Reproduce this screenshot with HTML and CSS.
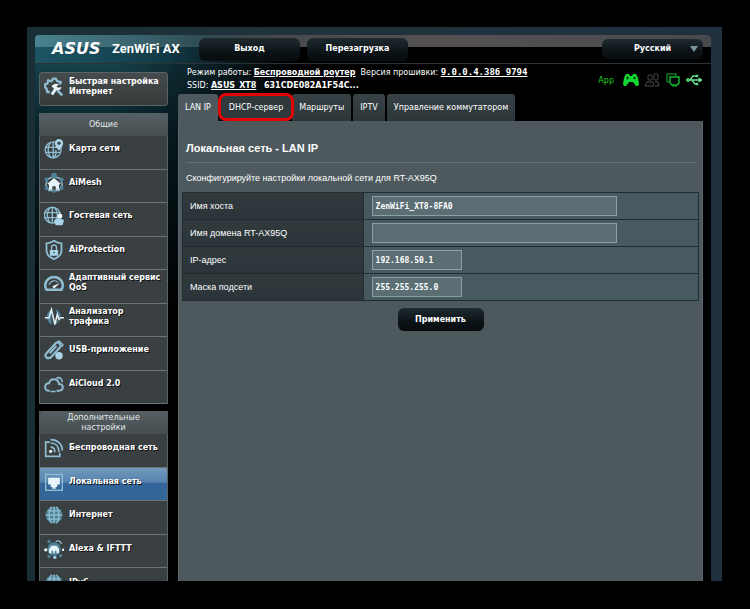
FILE: index.html
```html
<!DOCTYPE html>
<html lang="ru">
<head>
<meta charset="utf-8">
<title>ASUS ZenWiFi AX - LAN IP</title>
<link rel="stylesheet" href="styles.css">
</head>
<body>
<div class="frame">
<div class="shell">
  <header class="topbar">
    <span class="logo">ASUS</span>
    <span class="model">ZenWiFi AX</span>
    <button class="btn" type="button">Выход</button>
    <button class="btn" type="button">Перезагрузка</button>
    <span class="lang">
      <select class="btn lang-select" aria-label="Язык"><option>Русский</option></select>
    </span>
  </header>
  <div class="body">
    <nav class="sidebar">
      <a class="quick" href="#">
        <svg class="icon" viewBox="0 0 24 24"><path d="M7 18H4l-1-4-2-2V9l3-1 1-4 4 1 2-3h3l2 3 4 1-1 3" stroke-width="2.8"/><path class="white" d="M9 11c2-3 6-4 9-2l-3 2 2 2 4-1c-1 4-4 5-6 4l-4 6-3-2 4-6c-1-1-2-2-3-3z"/><path d="M16 16l6 6" stroke-width="3"/></svg>
        <span>Быстрая настройка Интернет</span>
      </a>
      <section class="menu">
        <h2 class="menu-title">Общие</h2>
        <ul class="menu-list general">
          <li><a href="#"><svg class="icon" viewBox="0 0 24 24"><circle cx="11" cy="13" r="9.5"/><path d="M2 10h14M2 16h18M11 4v19M8 4c-4 5-4 13 0 18M14 13c1 3 0 7-2 9"/><path class="solid" d="M18 14c-3-4-5-6-5-9a5 5 0 0 1 10 0c0 3-2 5-5 9z"/><circle class="dark" cx="18" cy="5" r="2"/></svg><span>Карта сети</span></a></li>
          <li><a href="#"><svg class="icon" viewBox="0 0 24 24"><path d="M5 7l7-3 8 3 2 7-4 7H6l-4-7z"/><circle class="teal" cx="12" cy="3" r="3.500"/><circle class="teal" cx="3" cy="8" r="2.500"/><circle class="teal" cx="21" cy="8" r="2.500"/><circle class="teal" cx="3" cy="18" r="2.500"/><circle class="teal" cx="21" cy="18" r="2.500"/><circle class="teal" cx="12" cy="22" r="2"/><path class="white" d="M4 13l8-7 8 7-2 1v6h-4v-4h-4v4H6v-6z"/></svg><span>AiMesh</span></a></li>
          <li><a href="#"><svg class="icon" viewBox="0 0 24 24"><circle cx="10" cy="11" r="9.5"/><path d="M1 8h18M1 14h18M10 2v18M7 2c-4 6-4 12 0 18M13 2c4 6 4 12 0 18"/><circle class="white" cx="19" cy="12" r="3"/><path class="solid" d="M12 18c1-4 11-4 12 0l-2 5h-8z"/></svg><span>Гостевая сеть</span></a></li>
          <li><a href="#"><svg class="icon" viewBox="0 0 24 24"><path d="M12 1c3 2 6 3 9 3v9c0 5-4 8-9 10-5-2-9-5-9-10V4c3 0 6-1 9-3z" stroke-width="2.2"/><path d="M9 12V9a3 3 0 0 1 6 0v3"/><rect class="solid" x="7" y="12" width="10" height="7" rx="1"/><circle class="dark" cx="12" cy="15" r="1"/></svg><span>AiProtection</span></a></li>
          <li><a href="#"><svg class="icon" viewBox="0 0 24 24"><path d="M3 20a10.500 10 0 1 1 18 0z" stroke-width="3"/><path d="M6 14c2-5 7-6 11-3" stroke-width="1.4"/><path class="white" d="M10 16l9-4-7 7z"/></svg><span>Адаптивный сервис QoS</span></a></li>
          <li><a href="#"><svg class="icon" viewBox="0 0 24 24"><path class="teal" d="M9 3v18a10 10 0 0 1 0-18zM14 3c5 2 6 6 6 9h-4zM13 16l5 2-4 3z"/><path class="line" d="M1 13h5l3-10 4 18 3-12 2 6 2-2h4"/></svg><span class="narrow">Анализатор трафика</span></a></li>
          <li><a href="#"><svg class="icon" viewBox="0 0 24 24"><path d="M3 16L14 4c3-3 8 2 5 5L9 20c-4 4-10 0-6-4z" stroke-width="2.6"/><path d="M7 16l8-9" stroke-width="2.4"/><path d="M16 3l2-2 5 5-2 2"/><circle class="solid" cx="18" cy="19" r="4.5"/></svg><span>USB-приложение</span></a></li>
          <li><a href="#"><svg class="icon" viewBox="0 0 24 24"><path d="M15 20h3c6 0 6-8 0-8-1-7-10-8-12-1-6 0-6 9-1 9h2" stroke-width="2.4"/><path d="M15 5c4-2 7 1 7 5M8 21h6" stroke-width="2"/></svg><span>AiCloud 2.0</span></a></li>
        </ul>
      </section>
      <section class="menu">
        <h2 class="menu-title">Дополнительные настройки</h2>
        <ul class="menu-list advanced">
          <li><a href="#"><svg class="icon" viewBox="0 0 24 24"><path d="M7 5H2v17h17v-4" stroke-width="2"/><circle class="white" cx="8" cy="16" r="2"/><path d="M8 11c3 0 5 2 5 6M8 6c6 0 10 4 10 11M8 2c8 0 14 5 14 13" stroke-width="2"/></svg><span>Беспроводная сеть</span></a></li>
          <li><a class="active" href="#"><svg class="icon" viewBox="0 0 24 24"><rect x="2" y="3" width="20" height="19"/><path class="white" d="M5 7h14v8h-3v3h-2v2h-4v-2H8v-3H5z"/></svg><span>Локальная сеть</span></a></li>
          <li><a href="#"><svg class="icon" viewBox="0 0 24 24"><circle class="teal" cx="12" cy="12" r="10"/><path d="M2 12h20M4 7h16M4 17h16M12 2v20M9 2c-4 6-4 14 0 20M15 2c4 6 4 14 0 20"/></svg><span>Интернет</span></a></li>
          <li><a href="#"><svg class="icon" viewBox="0 0 24 24"><circle class="teal" cx="12" cy="12" r="8"/><circle class="white" cx="2" cy="13" r="2"/><circle class="white" cx="23" cy="13" r="1.5"/><circle class="teal" cx="6" cy="3" r="2"/><circle class="teal" cx="6" cy="21" r="2"/><circle class="solid" cx="13" cy="22" r="2"/><circle class="teal" cx="20" cy="20" r="2"/><path d="M14 3c3-2 6 0 7 3"/><path class="white" d="M6 17v-5l3-4h6l3 4v5h-3v-3h-2v3h-2v-3H9v3z"/></svg><span>Alexa &amp; IFTTT</span></a></li>
          <li><a href="#"><svg class="icon" viewBox="0 0 24 24"><circle class="teal" cx="12" cy="12" r="10"/><path d="M2 12h20M4 7h16M4 17h16M12 2v20M9 2c-4 6-4 14 0 20M15 2c4 6 4 14 0 20"/></svg><span>IPv6</span></a></li>
        </ul>
      </section>
    </nav>
    <main class="content">
      <div class="status">
        <div class="status-text">
          <div>Режим работы: <a href="#">Беспроводной роутер</a> &nbsp;Версия прошивки: <a class="version" href="#">9.0.0.4.386_9794</a></div>
          <div>SSID: <a href="#">ASUS_XT8</a> &nbsp; <b>631CDE082A1F54C...</b></div>
        </div>
        <div class="status-icons">
          <a href="#">App</a>
          <svg viewBox="0 0 16 14"><path fill="#12d832" d="M3 1h3l1 2h2l1-2h3l2 4 1 6-1 2h-2l-3-4H6l-3 4H1l-1-2 1-6z"/><path stroke="#031" d="M3 5h3M4.500 3.500v3"/><circle cx="11.500" cy="5" r="1.200" fill="#031"/></svg>
          <svg viewBox="0 0 16 14" stroke="#484c4c"><rect x="4" y="2" width="4" height="5" rx="1"/><rect x="10" y="1" width="4" height="6" rx="1"/><path d="M3 9h6l1 4H1zM11 9h3l1 4h-4"/></svg>
          <svg viewBox="0 0 16 14" stroke="#12b830"><path d="M4 9H2V1h9v2"/><path d="M5 4h9v6l-2 2H7l-2-2z" stroke-width="1.500"/><path d="M7 13h5"/></svg>
          <svg viewBox="0 0 16 14" stroke="#6be08c"><path d="M1 7h13M4 7l3-4h4M6 7l3 4h2" stroke-width="1.400"/><path fill="#6be08c" d="M13 5l3 2-3 2z"/><circle cx="2" cy="7" r="1.500" fill="#12b830"/><circle cx="11" cy="3" r="1" fill="#6be08c"/><circle cx="11" cy="11" r="1" fill="#6be08c"/></svg>
        </div>
      </div>
      <nav class="tabs">
        <a class="tab current" href="#">LAN IP</a>
        <a class="tab marked" href="#">DHCP-сервер</a>
        <a class="tab" href="#">Маршруты</a>
        <a class="tab" href="#">IPTV</a>
        <a class="tab" href="#">Управление коммутатором</a>
      </nav>
      <form class="panel">
        <h1 class="title">Локальная сеть - LAN IP</h1>
        <p class="intro">Сконфигурируйте настройки локальной сети для RT-AX95Q</p>
        <table class="settings">
          <tr><th scope="row"><label for="host">Имя хоста</label></th><td><input class="wide" id="host" type="text" value="ZenWiFi_XT8-8FA0"></td></tr>
          <tr><th scope="row"><label for="domain">Имя домена RT-AX95Q</label></th><td><input class="wide" id="domain" type="text"></td></tr>
          <tr><th scope="row"><label for="ip">IP-адрес</label></th><td><input class="short" id="ip" type="text" value="192.168.50.1"></td></tr>
          <tr><th scope="row"><label for="mask">Маска подсети</label></th><td><input class="short" id="mask" type="text" value="255.255.255.0"></td></tr>
        </table>
        <button class="btn apply" type="button">Применить</button>
      </form>
    </main>
  </div>
</div>
</div>
</body>
</html>
```
FILE: styles.css
```css
* { box-sizing: border-box; }

body {
  margin: 0;
  padding: 27px 28px 28px 27px;
  height: 100vh;
  background: #000;
  color: #fff;
  font: 8px/12px "DejaVu Sans", Verdana, sans-serif;
}

a { color: inherit; text-decoration: none; }

.frame {
  height: 100%;
  padding: 8px 11px 0 8px;
  overflow: hidden;
  background: linear-gradient(90deg, #1a2e36, #22323c 40%, #20303f);
}

.shell {
  height: 100%;
  overflow: hidden;
  border-radius: 4px 4px 0 0;
  background:
    linear-gradient(90deg, rgba(0, 0, 0, 0) 80px, #000 260px),
    linear-gradient(180deg, #16414c 28px, #0a252d 90px, #000 280px);
}

.topbar {
  display: flex;
  align-items: center;
  height: 29px;
  padding: 0 8px 0 17px;
  border-bottom: 1px solid #2c3336;
  background:
    linear-gradient(90deg, rgba(84, 140, 152, 0.8), rgba(62, 92, 100, 0.7) 160px, #47494c 240px, #555153 60%, #48494d) 0 0 / 100% 12px no-repeat,
    linear-gradient(90deg, #1d5564, #123b47 130px, #000 250px);
}

.logo {
  width: 60px;
  font-size: 16px;
  font-weight: bold;
  font-style: oblique;
}

.model {
  width: 87px;
  font: bold 13px/16px Roboto, sans-serif;
}

.btn {
  width: 101px;
  height: 23px;
  margin-right: 7px;
  padding: 0;
  border: 0;
  border-radius: 6px;
  background: linear-gradient(#1f2b30, #0c1316 60%, #080c0e);
  color: #fff;
  font: bold 8px/12px "DejaVu Sans", Verdana, sans-serif;
  text-align: center;
}

.lang {
  position: relative;
  margin-left: auto;
}

.lang::after {
  content: "";
  position: absolute;
  right: 5px;
  top: 7px;
  border: 4px solid transparent;
  border-top: 6px solid #7d959e;
  border-bottom: 0;
  pointer-events: none;
}

.lang-select {
  display: block;
  height: 20px;
  margin: 0;
  appearance: none;
  text-align-last: center;
}

.body {
  display: flex;
  gap: 10px;
  padding: 0 8px 0 4px;
  height: calc(100% - 29px);
}

.sidebar {
  flex: none;
  width: 129px;
  padding-top: 8px;
  font-weight: bold;
  line-height: 10px;
}

.icon {
  flex: none;
  width: 20px;
  height: 20px;
  fill: none;
  stroke: #8fbdd2;
  stroke-width: 1.6;
}
.icon .solid { fill: #a9d3e6; stroke: none; }
.icon .white { fill: #e6f4fa; stroke: none; }
.icon .teal { fill: #4f8296; stroke: none; }
.icon .dark { fill: #384447; stroke: none; }
.icon .line { stroke: #e2f1f7; stroke-width: 1.8; }

.quick,
.menu-list a {
  display: flex;
  align-items: center;
  gap: 5px;
  padding-left: 4px;
}

.quick {
  height: 34px;
  margin-bottom: 7px;
  padding-bottom: 4px;
  border: 1px solid #596467;
  border-radius: 3px;
  background: linear-gradient(#454a4c, #363a3b);
}

.menu {
  margin-bottom: 7px;
  border: solid #596467;
  border-width: 0 1px;
}

.menu-title {
  display: flex;
  align-items: center;
  justify-content: center;
  min-height: 23px;
  margin: 0 -1px;
  padding: 0 24px;
  border-radius: 3px 3px 0 0;
  background: linear-gradient(#566063, #454d50);
  color: #e4e8e9;
  font-size: 8px;
  font-weight: normal;
  text-align: center;
}

.menu-list {
  display: grid;
  grid-auto-rows: 1fr;
  margin: 0;
  padding: 0;
  list-style: none;
  background: #3a3f41;
}
.general { min-height: 268px; }
.advanced { min-height: 168px; }

.menu-list li { border-bottom: 1px solid #6a7375; }

.menu-list a {
  height: 100%;
  padding-bottom: 6px;
  text-shadow: 1px 1px 0 #111;
}
.advanced a { padding-bottom: 4px; }
.narrow { max-width: 80px; }

.menu-list .active {
  background: linear-gradient(#7499bd, #5583ae 45%, #33659a 46%, #366698);
}

.content {
  display: flex;
  flex: 1;
  flex-direction: column;
  min-width: 0;
}

.status {
  display: flex;
  justify-content: space-between;
  height: 30px;
  padding: 2px 0 0 9px;
  line-height: 13px;
}
.status a,
.status b { font-weight: bold; }
.status-text a { text-decoration: underline; }
.status .version { font: bold 9px/12px "DejaVu Sans Mono", monospace; }

.status-icons {
  display: flex;
  align-items: center;
  gap: 5px;
  padding-right: 1px;
}
.status-icons a {
  margin-right: 4px;
  color: #1ed01e;
  font-weight: normal;
}
.status-icons svg {
  width: 16px;
  height: 14px;
  fill: none;
}

.tabs {
  display: flex;
  gap: 2px;
}

.tab {
  padding: 8px 7px 7px;
  border-radius: 3px 3px 0 0;
  background: linear-gradient(#384347, #2c3639);
}
.current { background: #4d595d; }
.marked {
  position: relative;
  margin: -1px -4px 0 -2px;
  padding: 6px 8px 4px;
  border: 3px solid #e30505;
  border-radius: 8px;
  background: #2f393c;
}

.panel {
  flex: 1;
  padding: 0 3px;
  border: solid #5a676b;
  border-width: 0 1px;
  background: #4d595d;
}

.title {
  margin: 0 2px 0 4px;
  padding: 19px 0 6px;
  border-bottom: 1px solid #647174;
  font: bold 11px/16px "Liberation Sans", Arial, sans-serif;
}

.intro {
  margin: 9px 4px 8px;
  font: 9px/12px "Liberation Sans", Arial, sans-serif;
}

.settings {
  width: 100%;
  border-collapse: collapse;
  background: #475a5f;
}
.settings th,
.settings td {
  height: 27px;
  padding: 0 8px;
  border: 1px solid #222d31;
}
.settings th {
  width: 35%;
  padding: 0 7px;
  background: linear-gradient(#31393c, #2b3539);
  font: 9px/12px "Liberation Sans", Arial, sans-serif;
  text-align: left;
}

.settings input {
  display: block;
  height: 20px;
  padding: 0 3px;
  border: 1px solid #8b9fa4;
  border-radius: 0;
  background: #5a6e74;
  color: #fff;
  font: bold 8px/12px "DejaVu Sans Mono", monospace;
}
.wide { width: 245px; }
.short { width: 90px; }

.apply {
  display: block;
  width: 86px;
  margin: 7px auto 0;
}
```
